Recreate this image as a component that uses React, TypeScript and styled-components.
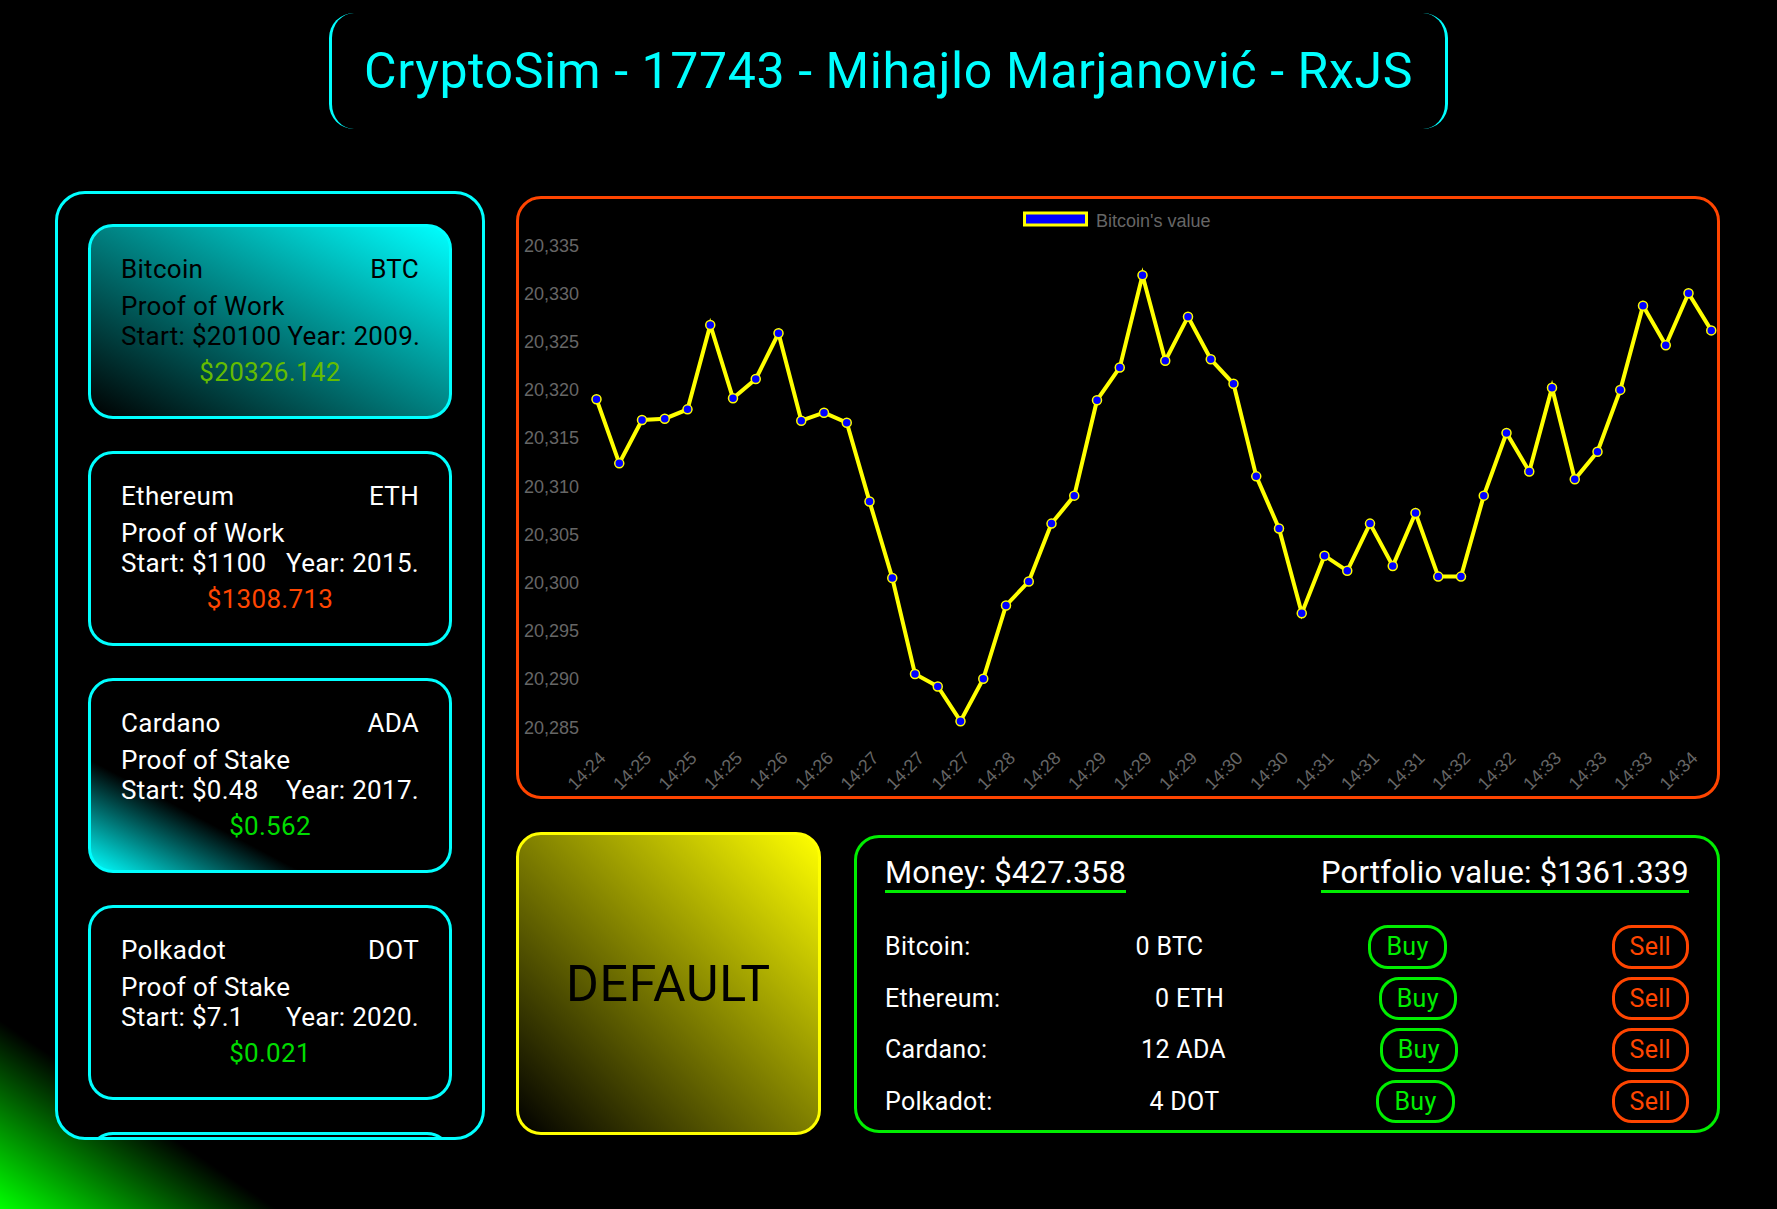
import React from "react";
import styled, { createGlobalStyle, css } from "styled-components";

const GlobalStyle = createGlobalStyle`
  html, body {
    margin: 0;
    padding: 0;
    background: #000;
  }
  * { box-sizing: border-box; }
`;

const CYAN = "#00ffff";
const ORANGE = "#ff4500";
const GREEN = "#00ee00";
const YELLOW = "#ffff00";

const Page = styled.div`
  width: 100%;
  height: 100vh;
  overflow: hidden;
  background: linear-gradient(to top right, #00ff00 0%, #000000 7.8%);
  font-family: Roboto, "Liberation Sans", sans-serif;
  color: #fff;
`;

const TitleBar = styled.header`
  display: flex;
  justify-content: center;
  padding-top: 13px;
`;

const Title = styled.h1`
  margin: 0;
  padding: 29px 32px;
  border-left: 3px solid ${CYAN};
  border-right: 3px solid ${CYAN};
  border-radius: 25px;
  font-size: 50px;
  font-weight: 400;
  letter-spacing: 0.6px;
  line-height: normal;
  color: ${CYAN};
  white-space: nowrap;
`;

const Main = styled.main`
  display: flex;
  gap: 31px;
  padding: 62px 57px 0 55px;
`;

const CoinPanel = styled.section`
  width: 430px;
  height: 949px;
  flex-shrink: 0;
  border: 3px solid ${CYAN};
  border-radius: 30px;
  background: #000;
  overflow: hidden;
  padding: 30px;
  display: flex;
  flex-direction: column;
  gap: 32px;
`;

type CardVariant = "selected" | "hover" | "plain";

const Card = styled.div<{ $variant: CardVariant }>`
  flex-shrink: 0;
  border: 3px solid ${CYAN};
  border-radius: 25px;
  padding: 28px 30px 29px;
  font-size: 26px;
  font-weight: 400;
  letter-spacing: 0.3px;
  line-height: 29.25px;
  color: #fff;
  background: #000;
  ${(p) =>
    p.$variant === "selected" &&
    css`
      background: linear-gradient(to top right, #000000 0%, ${CYAN} 100%);
      color: #000;
    `}
  ${(p) =>
    p.$variant === "hover" &&
    css`
      background: linear-gradient(to top right, ${CYAN} 0%, #000000 29%);
    `}
`;

const CardHeader = styled.div`
  display: flex;
  justify-content: space-between;
  margin-bottom: 8px;
`;

const CardLine = styled.div`
  white-space: nowrap;
`;

const CardStats = styled.div`
  display: flex;
  justify-content: space-between;
  gap: 6px;
  white-space: nowrap;
`;

const CardPrice = styled.div<{ $color: string }>`
  margin-top: 7px;
  text-align: center;
  color: ${(p) => p.$color};
`;

const RightColumn = styled.div`
  flex: 1;
  display: flex;
  flex-direction: column;
  gap: 33px;
  padding-top: 5px;
  min-width: 0;
`;

const ChartPanel = styled.section`
  height: 603px;
  border: 3px solid ${ORANGE};
  border-radius: 25px;
  overflow: hidden;
  background: #000;
`;

const ChartSvg = styled.svg`
  display: block;
  width: 100%;
  height: 100%;
`;

const BottomRow = styled.div`
  display: flex;
  gap: 33px;
  align-items: flex-start;
`;

const StrategyBox = styled.div`
  width: 305px;
  height: 303px;
  flex-shrink: 0;
  border: 3px solid ${YELLOW};
  border-radius: 25px;
  background: linear-gradient(to top right, #000000 0%, ${YELLOW} 100%);
  display: flex;
  align-items: center;
  justify-content: center;
  font-size: 50px;
  font-weight: 400;
  letter-spacing: 0.8px;
  color: #000;
`;

const PortfolioPanel = styled.section`
  flex: 1;
  height: 298px;
  margin-top: 3px;
  border: 3px solid ${GREEN};
  border-radius: 25px;
  background: #000;
  overflow: hidden;
  padding: 17px 28px 0;
`;

const PortfolioHeader = styled.div`
  display: flex;
  justify-content: space-between;
  align-items: flex-end;
`;

const HeaderStat = styled.span`
  display: inline-block;
  font-size: 31px;
  font-weight: 400;
  letter-spacing: 0.2px;
  line-height: 35px;
  color: #fff;
  border-bottom: 3px solid ${GREEN};
  white-space: nowrap;
`;

const HoldingList = styled.div`
  margin-top: 32px;
  display: flex;
  flex-direction: column;
  gap: 8px;
`;

const HoldingRow = styled.div`
  display: flex;
  justify-content: space-between;
  align-items: center;
  font-size: 25px;
  font-weight: 400;
  letter-spacing: 0.3px;
  color: #fff;
  white-space: nowrap;
`;

const TradeButton = styled.button<{ $color: string }>`
  font-family: Roboto, "Liberation Sans", sans-serif;
  font-size: 25px;
  font-weight: 400;
  letter-spacing: 0.3px;
  line-height: 29.5px;
  padding: 4px 15px;
  background: transparent;
  color: ${(p) => p.$color};
  border: 3px solid ${(p) => p.$color};
  border-radius: 20px;
  cursor: pointer;
`;

const coins: {
  name: string;
  symbol: string;
  algo: string;
  start: string;
  year: number;
  price: string;
  color: string;
  variant: CardVariant;
}[] = [
  { name: "Bitcoin", symbol: "BTC", algo: "Proof of Work", start: "$20100", year: 2009, price: "$20326.142", color: "#64bc00", variant: "selected" },
  { name: "Ethereum", symbol: "ETH", algo: "Proof of Work", start: "$1100", year: 2015, price: "$1308.713", color: ORANGE, variant: "plain" },
  { name: "Cardano", symbol: "ADA", algo: "Proof of Stake", start: "$0.48", year: 2017, price: "$0.562", color: "#00dc00", variant: "hover" },
  { name: "Polkadot", symbol: "DOT", algo: "Proof of Stake", start: "$7.1", year: 2020, price: "$0.021", color: "#00dc00", variant: "plain" },
  { name: "Solana", symbol: "SOL", algo: "Proof of History", start: "$1.5", year: 2020, price: "$33.104", color: "#00dc00", variant: "plain" },
];

const holdings = [
  { name: "Bitcoin", qty: "0 BTC" },
  { name: "Ethereum", qty: "0 ETH" },
  { name: "Cardano", qty: "12 ADA" },
  { name: "Polkadot", qty: "4 DOT" },
  { name: "Solana", qty: "0 SOL" },
];

const values = [
  20319.0, 20312.35, 20316.85, 20316.98, 20317.95, 20326.7, 20319.1, 20321.1, 20325.84, 20316.77,
  20317.6, 20316.57, 20308.4, 20300.46, 20290.5, 20289.2, 20285.6, 20290.0, 20297.6, 20300.1,
  20306.1, 20309.0, 20318.9, 20322.3, 20331.86, 20323.0, 20327.56, 20323.14, 20320.6, 20311.0,
  20305.6, 20296.8, 20302.77, 20301.2, 20306.1, 20301.7, 20307.2, 20300.6, 20300.6, 20309.0,
  20315.5, 20311.5, 20320.2, 20310.7, 20313.55, 20319.97, 20328.7, 20324.6, 20330.0, 20326.14,
];

const times = [
  "14:24", "14:25", "14:25", "14:25", "14:26", "14:26", "14:27", "14:27", "14:27", "14:28",
  "14:28", "14:29", "14:29", "14:29", "14:30", "14:30", "14:31", "14:31", "14:31", "14:32",
  "14:32", "14:33", "14:33", "14:33", "14:34",
];

// chart drawing coordinates (relative to chart panel content box)
const OX = 519;
const OY = 199;
const px = (i: number) => 596.5 + i * 22.75 - OX;
const py = (v: number) => 245 + (20335 - v) * 9.64 - OY;

const PriceChart: React.FC = () => {
  const path = values.map((v, i) => `${i === 0 ? "M" : "L"}${px(i).toFixed(1)} ${py(v).toFixed(1)}`).join(" ");
  const ticks = Array.from({ length: 11 }, (_, k) => 20335 - k * 5);
  return (
    <ChartSvg viewBox="0 0 1198 597" preserveAspectRatio="none">
      <g fontFamily="'Liberation Sans', Arial, sans-serif" fontSize="18" fill="#666">
        <rect x={1024.5 - OX} y={213 - OY} width={62} height={12} fill="#0000ff" stroke={YELLOW} strokeWidth={3} />
        <text x={1096 - OX} y={227 - OY}>Bitcoin's value</text>
        {ticks.map((t, k) => (
          <text key={t} x={579 - OX} y={245 + k * 48.2 + 6.5 - OY} textAnchor="end">
            {t.toLocaleString("en-US")}
          </text>
        ))}
        {times.map((t, k) => {
          const x = px(k * 2) + 6;
          const y = 755 - OY;
          return (
            <text key={k} x={x} y={y} textAnchor="end" dominantBaseline="central" transform={`rotate(-45 ${x} ${y})`}>
              {t}
            </text>
          );
        })}
      </g>
      <path d={path} fill="none" stroke={YELLOW} strokeWidth={4} strokeLinejoin="miter" strokeMiterlimit={10} />
      {values.map((v, i) => (
        <circle key={i} cx={px(i)} cy={py(v)} r={4.5} fill="#0000ff" stroke={YELLOW} strokeWidth={1.5} />
      ))}
    </ChartSvg>
  );
};

export default function App() {
  return (
    <Page>
      <GlobalStyle />
      <TitleBar>
        <Title>CryptoSim - 17743 - Mihajlo Marjanović - RxJS</Title>
      </TitleBar>
      <Main>
        <CoinPanel>
          {coins.map((c) => (
            <Card key={c.symbol} $variant={c.variant}>
              <CardHeader>
                <span>{c.name}</span>
                <span>{c.symbol}</span>
              </CardHeader>
              <CardLine>{c.algo}</CardLine>
              <CardStats>
                <span>Start: {c.start}</span>
                <span>Year: {c.year}.</span>
              </CardStats>
              <CardPrice $color={c.color}>{c.price}</CardPrice>
            </Card>
          ))}
        </CoinPanel>
        <RightColumn>
          <ChartPanel>
            <PriceChart />
          </ChartPanel>
          <BottomRow>
            <StrategyBox>DEFAULT</StrategyBox>
            <PortfolioPanel>
              <PortfolioHeader>
                <HeaderStat>Money: $427.358</HeaderStat>
                <HeaderStat>Portfolio value: $1361.339</HeaderStat>
              </PortfolioHeader>
              <HoldingList>
                {holdings.map((h) => (
                  <HoldingRow key={h.name}>
                    <span>{h.name}:</span>
                    <span>{h.qty}</span>
                    <TradeButton $color={GREEN}>Buy</TradeButton>
                    <TradeButton $color={ORANGE}>Sell</TradeButton>
                  </HoldingRow>
                ))}
              </HoldingList>
            </PortfolioPanel>
          </BottomRow>
        </RightColumn>
      </Main>
    </Page>
  );
}
